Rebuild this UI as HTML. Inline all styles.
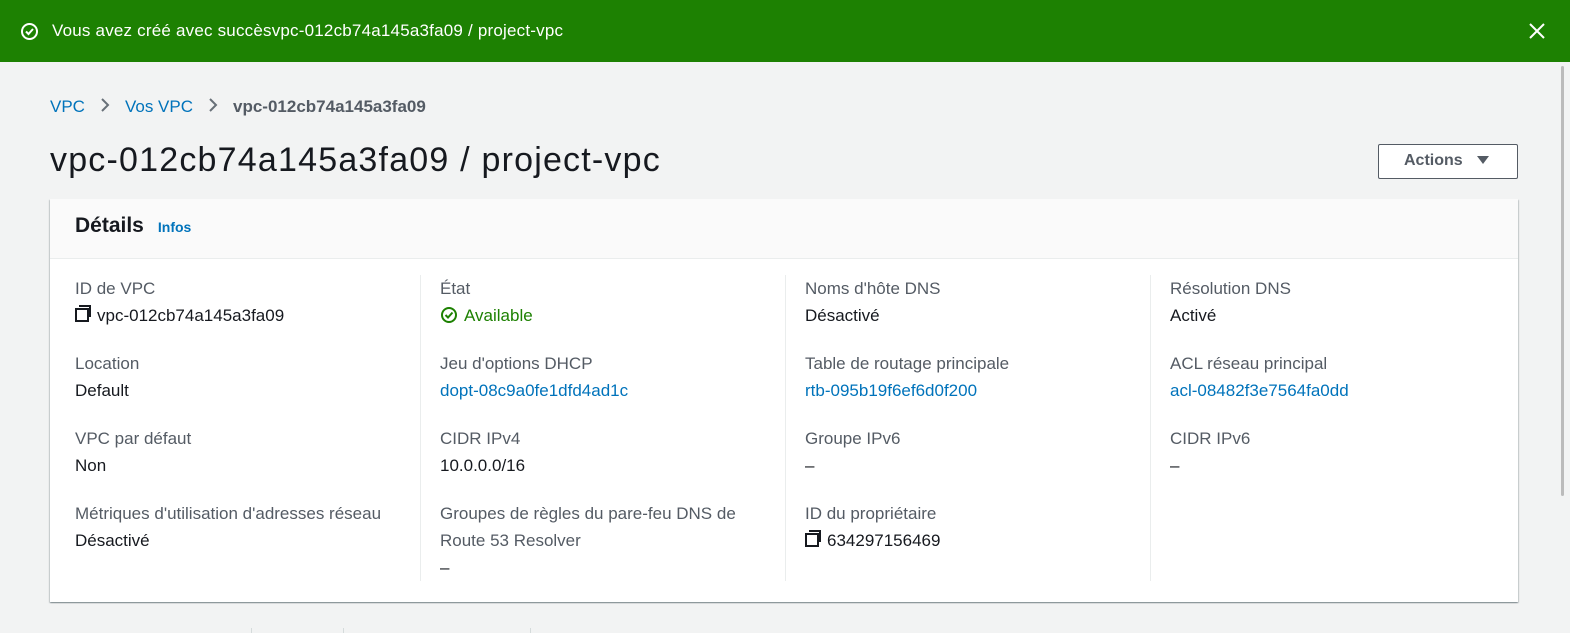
<!DOCTYPE html><html><head><meta charset="utf-8"><style>
*{box-sizing:border-box;margin:0;padding:0}
body{width:1570px;height:633px;overflow:hidden;background:#f2f3f3;font-family:"Liberation Sans",sans-serif;color:#16191f;position:relative}
.ban{position:absolute;left:0;top:0;width:1570px;height:62px;background:#1d8102;color:#fff;font-size:17px}
.ban .t{position:absolute;left:52px;top:21px;letter-spacing:0.2px}
.a{position:absolute}
.bc{top:97px;left:50px;font-size:17px}
.lk{color:#0073bb}
h1{position:absolute;left:50px;top:141px;font-size:34px;font-weight:400;letter-spacing:1.2px}
.btn{position:absolute;left:1378px;top:144px;width:140px;height:35px;border:1px solid #545b64;border-radius:2px;background:#fff;font-weight:bold;font-size:16px;color:#545b64;padding:7px 0 0 25px}
.card{position:absolute;left:50px;top:199px;width:1468px;height:403px;background:#fff;box-shadow:0 1px 1px 0 rgba(0,28,36,.3),1px 1px 1px 0 rgba(0,28,36,.15),-1px 1px 1px 0 rgba(0,28,36,.15)}
.hd{height:60px;background:#fafafa;border-bottom:1px solid #eaeded;padding:15px 25px}
.hd b{font-size:21px}
.hd span{font-size:14px;font-weight:bold;color:#0073bb;margin-left:14px}
.col{position:absolute;top:76px;width:325px;font-size:17px;line-height:27px}
.sep{position:absolute;top:76px;width:1px;height:306px;background:#eaeded}
.l{color:#545b64}
.g{margin-bottom:21px}
.ic{display:inline-block;width:14px;height:14px;border:2px solid #16191f;position:relative;margin-right:8px;vertical-align:-1px}
.ic:before{content:"";position:absolute;left:2px;top:-5px;width:10px;height:10px;border-top:2px solid #16191f;border-right:2px solid #16191f}
</style></head><body>
<div class="ban"><svg class="a" style="left:20px;top:22px" width="19" height="19" viewBox="0 0 19 19"><circle cx="9.5" cy="9.5" r="7.5" fill="none" stroke="#fff" stroke-width="2"/><path d="M6 9.5l2.5 2.5 4.5-5" fill="none" stroke="#fff" stroke-width="2"/></svg><div class="t">Vous avez créé avec succèsvpc-012cb74a145a3fa09 / project-vpc</div>
<svg class="a" style="left:1528px;top:22px" width="18" height="18"><path d="M2 2l14 14M16 2L2 16" stroke="#fff" stroke-width="2"/></svg></div>
<div style="position:absolute;left:1561px;top:66px;width:3px;height:430px;background:#bbb;border-radius:2px"></div>
<div class="a bc"><span class="lk">VPC</span><span style="margin:0 15px"><svg width="10" height="14"><path d="M2 1l6 6-6 6" fill="none" stroke="#687078" stroke-width="2"/></svg></span><span class="lk">Vos VPC</span><span style="margin:0 15px"><svg width="10" height="14"><path d="M2 1l6 6-6 6" fill="none" stroke="#687078" stroke-width="2"/></svg></span><b style="color:#545b64">vpc-012cb74a145a3fa09</b></div>
<h1>vpc-012cb74a145a3fa09 / project-vpc</h1>
<div class="btn">Actions <svg width="12" height="10" style="margin-left:10px"><path d="M0 1h12L6 9z" fill="#545b64"/></svg></div>
<div class="card"><div class="hd"><b>Détails</b><span>Infos</span></div>
<div class="sep" style="left:370px"></div><div class="sep" style="left:735px"></div><div class="sep" style="left:1100px"></div>
<div class="col" style="left:25px;width:340px"><div class="g"><div class="l">ID de VPC</div><div><span class="ic"></span>vpc-012cb74a145a3fa09</div></div><div class="g"><div class="l">Location</div><div>Default</div></div><div class="g"><div class="l">VPC par défaut</div><div>Non</div></div><div class="g"><div class="l">Métriques d'utilisation d'adresses réseau</div><div>Désactivé</div></div></div>
<div class="col" style="left:390px"><div class="g"><div class="l">État</div><div style="color:#1d8102"><svg width="18" height="18" style="vertical-align:-3px;margin-right:6px"><circle cx="9" cy="9" r="7" fill="none" stroke="#1d8102" stroke-width="2"/><path d="M5.5 9l2.5 2.5 4.5-5" fill="none" stroke="#1d8102" stroke-width="2"/></svg>Available</div></div><div class="g"><div class="l">Jeu d'options DHCP</div><div class="lk">dopt-08c9a0fe1dfd4ad1c</div></div><div class="g"><div class="l">CIDR IPv4</div><div>10.0.0.0/16</div></div><div class="g"><div class="l">Groupes de règles du pare-feu DNS de Route 53 Resolver</div><div>–</div></div></div>
<div class="col" style="left:755px"><div class="g"><div class="l">Noms d'hôte DNS</div><div>Désactivé</div></div><div class="g"><div class="l">Table de routage principale</div><div class="lk">rtb-095b19f6ef6d0f200</div></div><div class="g"><div class="l">Groupe IPv6</div><div>–</div></div><div class="g"><div class="l">ID du propriétaire</div><div><span class="ic"></span>634297156469</div></div></div>
<div class="col" style="left:1120px"><div class="g"><div class="l">Résolution DNS</div><div>Activé</div></div><div class="g"><div class="l">ACL réseau principal</div><div class="lk">acl-08482f3e7564fa0dd</div></div><div class="g"><div class="l">CIDR IPv6</div><div>–</div></div></div>
</div>
<div class="a" style="left:251px;top:628px;width:1px;height:5px;background:#d5dbdb"></div><div class="a" style="left:343px;top:628px;width:1px;height:5px;background:#d5dbdb"></div><div class="a" style="left:530px;top:628px;width:1px;height:5px;background:#d5dbdb"></div>
</body></html>
